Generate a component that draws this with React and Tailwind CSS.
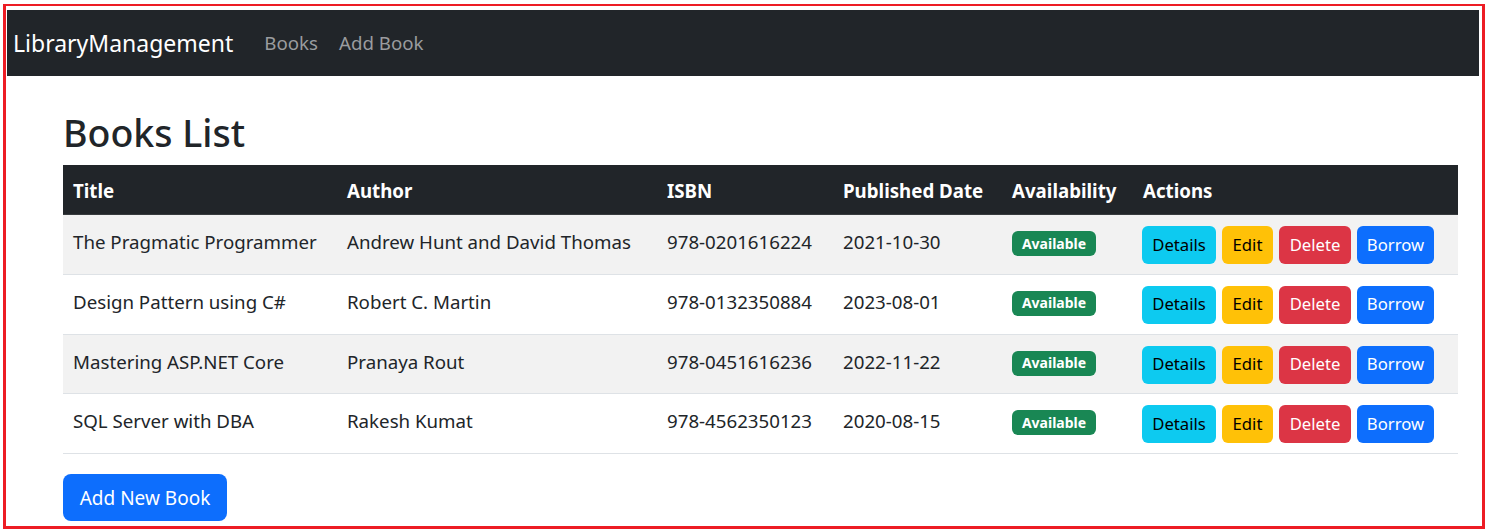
import React from "react";

const books = [
  { title: "The Pragmatic Programmer", author: "Andrew Hunt and David Thomas", isbn: "978-0201616224", date: "2021-10-30" },
  { title: "Design Pattern using C#", author: "Robert C. Martin", isbn: "978-0132350884", date: "2023-08-01" },
  { title: "Mastering ASP.NET Core", author: "Pranaya Rout", isbn: "978-0451616236", date: "2022-11-22" },
  { title: "SQL Server with DBA", author: "Rakesh Kumat", isbn: "978-4562350123", date: "2020-08-15" },
];

export default function App() {
  return (
    <div className="pt-[4px] pl-[3px] bg-white min-h-[531px]" style={{ fontFamily: '"Noto Sans", "Open Sans", sans-serif' }}>
      <div className="w-[1482px] h-[525px] border-[3px] border-t-2 border-[#ed1c24] pl-[1px] pt-[4px] pr-[3px] text-[#212529]">
        <nav className="h-[66px] bg-[#212529] flex items-center pl-[6px]">
          <span className="text-white text-[23px] leading-none mr-[31px]">LibraryManagement</span>
          <span className="text-[#9a9c9f] text-[18.7px] leading-none mr-[21px]">Books</span>
          <span className="text-[#9a9c9f] text-[18.7px] leading-none">Add Book</span>
        </nav>
        <div className="ml-[56px] w-[1395px]">
          <h1 className="mt-[34px] mb-[10px] text-[37.5px] font-medium leading-[1.2]">Books List</h1>
          <table className="table-fixed w-[1395px] border-collapse text-[18.7px] leading-[29px]">
            <colgroup>
              <col className="w-[274px]" />
              <col className="w-[320px]" />
              <col className="w-[176px]" />
              <col className="w-[169px]" />
              <col className="w-[131px]" />
              <col className="w-[325px]" />
            </colgroup>
            <thead>
              <tr className="bg-[#212529] text-white border-b border-[#373b3e]">
                {["Title", "Author", "ISBN", "Published Date", "Availability", "Actions"].map((h) => (
                  <th key={h} className="text-left font-bold px-[10px] pt-[11px] pb-[9px] whitespace-nowrap">{h}</th>
                ))}
              </tr>
            </thead>
            <tbody>
              {books.map((b, i) => (
                <tr key={b.isbn} className={`border-b border-[#dee2e6] ${i % 2 === 0 ? "bg-[#f2f2f2]" : "bg-white"}`}>
                  <td className="align-top px-[10px] pt-[12px] pb-[9px] whitespace-nowrap">{b.title}</td>
                  <td className="align-top px-[10px] pt-[12px] pb-[9px] whitespace-nowrap">{b.author}</td>
                  <td className="align-top px-[10px] pt-[12px] pb-[9px] whitespace-nowrap">{b.isbn}</td>
                  <td className="align-top px-[10px] pt-[12px] pb-[9px] whitespace-nowrap">{b.date}</td>
                  <td className="align-top px-[10px] pt-[16px] pb-[9px]">
                    <span className="inline-flex items-center justify-center w-[84px] h-[25px] rounded-[6px] bg-[#198754] text-white text-[14px] font-bold leading-none align-top">Available</span>
                  </td>
                  <td className="align-top pl-[9px] pr-[10px] pt-[11px] pb-[9.75px]">
                    <div className="flex gap-[6px] text-[16.7px] leading-none">
                      <button className="w-[74px] h-[38px] rounded-[6px] bg-[#0dcaf0] text-black">Details</button>
                      <button className="w-[51px] h-[38px] rounded-[6px] bg-[#ffc107] text-black">Edit</button>
                      <button className="w-[72px] h-[38px] rounded-[6px] bg-[#dc3545] text-white">Delete</button>
                      <button className="w-[77px] h-[38px] rounded-[6px] bg-[#0d6efd] text-white">Borrow</button>
                    </div>
                  </td>
                </tr>
              ))}
            </tbody>
          </table>
          <button className="mt-[20px] w-[164px] h-[47px] rounded-[8px] bg-[#0d6efd] text-white text-[19px] leading-none pt-[2px]">Add New Book</button>
        </div>
      </div>
    </div>
  );
}
